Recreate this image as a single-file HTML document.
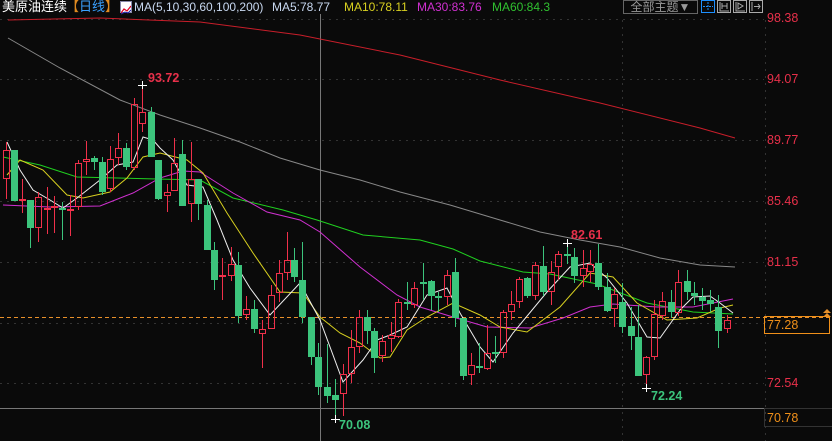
<!DOCTYPE html>
<html><head><meta charset="utf-8"><style>
html,body{margin:0;padding:0;background:#0a0a0a;width:832px;height:441px;overflow:hidden;font-family:"Liberation Sans","Noto Sans CJK SC",sans-serif}
.hd{position:absolute;top:0;left:0;height:14px;font-size:13px;line-height:14px;white-space:nowrap}
.ax{position:absolute;font-size:12.5px;line-height:14px}
</style></head><body>
<svg id="c" width="832" height="441" style="position:absolute;left:0;top:0"></svg>
<div class="hd" style="left:2px;color:#fff">美原油连续</div>
<div class="hd" style="left:66px;color:#e08a20">【<span style="color:#3aa0ff">日线</span>】</div>
<div style="position:absolute;left:120px;top:1px;width:10px;height:10px;background:#fff;border:1px solid #88a"><svg width="10" height="10"><polyline points="0,8 3,4 6,6 10,1" fill="none" stroke="#d02" stroke-width="1.2"/><polyline points="0,9 4,7 7,8 10,5" fill="none" stroke="#22a" stroke-width="1"/></svg></div>
<div class="hd" style="left:134px;color:#c8d8f0;font-size:12px">MA(5,10,30,60,100,200)</div>
<div class="hd" style="left:272px;color:#c8d8f0;font-size:12px">MA5:78.77</div>
<div class="hd" style="left:344px;color:#d8d020;font-size:12px">MA10:78.11</div>
<div class="hd" style="left:417px;color:#d030d0;font-size:12px">MA30:83.76</div>
<div class="hd" style="left:492px;color:#30c030;font-size:12px">MA60:84.3</div>
<div style="position:absolute;left:623px;top:0;width:73px;height:12px;border:1px solid #666;color:#999;font-size:12px;line-height:12px;text-align:center">全部主题▼</div>
<div class="ax" style="left:767px;top:11px;color:#e8304a">98.38</div>
<div class="ax" style="left:767px;top:72px;color:#e8304a">94.07</div>
<div class="ax" style="left:767px;top:133px;color:#e8304a">89.77</div>
<div class="ax" style="left:767px;top:194px;color:#e8304a">85.46</div>
<div class="ax" style="left:767px;top:255px;color:#e8304a">81.15</div>
<div class="ax" style="left:764px;top:316px;width:66px;border:1px solid #f0901a;color:#f0901a;line-height:16px;padding-left:2px;box-sizing:border-box;height:18px">77.28</div>
<div class="ax" style="left:767px;top:376px;color:#e8304a">72.54</div>
<div class="ax" style="left:764px;top:408px;width:68px;height:19px;border:1px solid #333;border-right:none;color:#f0901a;line-height:18px;padding-left:2px;box-sizing:border-box">70.78</div>
<div class="ax" style="left:148px;top:71px;color:#e8304a;font-weight:bold">93.72</div>
<div class="ax" style="left:571px;top:228px;color:#e8304a;font-weight:bold">82.61</div>
<div class="ax" style="left:651px;top:389px;color:#3cc47c;font-weight:bold">72.24</div>
<div class="ax" style="left:339px;top:418px;color:#3cc47c;font-weight:bold">70.08</div>
<script>
var s='';
function L(x1,y1,x2,y2,c,w,d){s+='<line x1="'+x1+'" y1="'+y1+'" x2="'+x2+'" y2="'+y2+'" stroke="'+c+'" stroke-width="'+(w||1)+'"'+(d?' stroke-dasharray="'+d+'"':'')+'/>';}
[19,79,140,201,262,323,383].forEach(function(y){L(0,y+.5,764,y+.5,'#333',1,'2,5');});
L(622.5,20,622.5,441,'#333',1,'2,5');
L(765.5,20,765.5,441,'#333',1,'2,5');
L(320.5,14,320.5,441,'#777',1);
L(0,408.5,764,408.5,'#777',1);
L(0,317.5,832,317.5,'#e8902a',1,'4,3');
s+='<rect x="701.5" y="0.5" width="13" height="12" fill="none" stroke="#1e90ff"/><path d="M708 2v9M703 6.5h10" stroke="#1e90ff" stroke-dasharray="2,1"/>';
[717,733,749].forEach(function(x){s+='<rect x="'+(x+.5)+'" y="0.5" width="13" height="12" fill="none" stroke="#aaa"/>';});
s+='<path d="M720 2v9h9M722 3v6M727 3v6M722 6h5" stroke="#aaa" fill="none"/><path d="M736 2v9h9M738 3l5 3-5 3z" stroke="#aaa" fill="none"/><path d="M752 2v9M754 6.5h6M758 4l2 2.5-2 2.5" stroke="#aaa" fill="none"/>';
s+='<path d="M823 313l4-4 4 4M823 317l4-4 4 4" fill="#e8902a"/>';
function P(pts,c){s+='<polyline points="'+pts+'" fill="none" stroke="'+c+'" stroke-width="1"/>';}
P('8,20 100,18 200,22 300,35 400,55 500,80 600,103 700,128 735,138','#c81e2a');
P('8,38 60,68 120,100 160,115 200,128 240,142 280,158 320,170 360,180 400,192 450,205 500,220 540,232 580,240 620,247 660,258 700,265 735,267','#888');
P('3,157 40,165 77,177 157,179 200,180 233,198 283,210 317,220 363,235 420,240 453,249 480,261 523,272 550,274 597,284 647,303 693,312 733,314','#20d020');
P('3,205 50,207 100,206 133,193 160,178 183,171 200,172 233,193 267,212 300,220 320,232 360,267 397,295 420,307 453,317 487,327 530,328 563,318 590,307 613,304 657,307 693,307 733,299','#d030d0');
P('7,175 20,160 43,170 67,195 83,198 110,192 127,178 143,157 160,153 187,160 203,173 227,213 253,253 280,292 303,293 320,317 340,333 360,343 380,358 390,357 407,330 427,317 453,303 480,315 500,327 527,332 560,307 590,273 613,277 637,303 667,320 697,318 720,308 733,305','#d8d020');
P('7,142 20,170 33,190 50,200 63,208 77,198 100,180 117,165 133,162 143,137 153,140 160,148 173,160 187,185 203,187 217,220 233,260 250,288 270,315 300,283 320,320 343,382 363,360 377,340 390,335 407,327 427,295 447,288 460,313 480,347 493,362 513,333 547,292 570,267 590,263 607,278 627,303 647,337 660,338 680,310 693,297 710,296 720,303 733,313','#eee');
var R='#f0304a',G='#3cc47c';
var K=[
[6,150,179,142,199,R],[14,150,201,150,201,G],[22,199,201,179,213,R],[30,200,228,200,248,G],[38,197,228,192,242,R],[47,208,210,187,234,R],[54,206,208,196,233,R],[62,208,210,202,240,G],[70,209,211,195,236,R],[78,163,207,160,210,R],[86,159,162,141,175,R],[94,158,162,156,170,G],[102,162,192,157,195,G],[110,159,189,146,192,R],[118,148,158,133,165,R],[126,148,167,143,170,G],[134,104,168,98,170,R],[142,112,124,85,132,R],[151,112,157,107,157,G],[158,160,199,160,200,G],[167,192,196,184,212,R],[174,163,191,138,191,R],[182,154,206,140,206,G],[191,179,204,142,222,R],[198,179,204,179,220,G],[207,205,250,200,250,G],[214,250,280,242,290,G],[222,275,277,258,300,R],[231,264,276,247,281,R],[238,265,316,252,323,G],[246,309,315,296,320,R],[254,309,329,300,333,G],[262,329,334,320,368,R],[271,295,329,285,329,R],[279,273,293,260,302,R],[287,260,273,232,280,R],[294,260,277,248,282,G],[302,280,317,242,323,G],[311,317,357,317,365,G],[318,357,387,343,395,G],[327,387,396,344,403,G],[335,395,400,379,419,G],[343,374,394,364,416,R],[351,347,374,330,383,R],[359,317,347,310,353,R],[367,317,331,310,344,G],[374,331,358,328,373,G],[382,341,356,335,362,R],[391,335,339,322,352,R],[398,302,337,299,338,R],[407,302,304,282,310,G],[414,288,305,282,308,R],[423,282,284,263,300,G],[431,281,296,280,310,G],[438,296,298,292,312,G],[447,275,297,270,305,R],[455,272,318,258,327,G],[463,318,376,318,380,G],[471,365,375,353,385,R],[479,366,368,343,373,G],[487,353,369,325,370,R],[495,352,354,336,363,G],[503,312,353,310,358,R],[511,304,312,291,320,R],[519,279,302,277,308,R],[527,278,296,277,298,G],[535,265,296,262,300,R],[543,266,292,246,296,G],[551,272,292,261,305,R],[558,254,267,251,280,R],[567,254,256,243,264,G],[574,257,276,248,283,G],[583,268,276,250,287,R],[590,264,272,250,282,R],[598,263,287,244,290,G],[607,287,311,273,312,G],[614,294,309,288,327,R],[622,302,327,283,333,G],[631,326,336,307,350,G],[638,337,376,305,376,G],[646,357,375,356,388,R],[654,314,357,300,360,R],[662,301,316,292,320,R],[671,302,312,290,318,G],[678,282,313,270,316,R],[687,281,292,270,300,G],[694,293,296,282,305,G],[702,297,301,288,310,G],[710,300,304,290,312,G],[718,307,331,295,348,G],[727,320,329,315,333,R]];
K.forEach(function(k){var x=k[0],t=k[1],b=k[2],h=k[3],l=k[4],c=k[5];
 L(x+.5,h,x+.5,t,c,1);L(x+.5,b,x+.5,l,c,1);
 if(b-t<2){L(x-3,t+.5,x+4,t+.5,c,2);}
 else if(c==R){s+='<rect x="'+(x-2.5)+'" y="'+(t+.5)+'" width="6" height="'+(b-t-1)+'" fill="none" stroke="'+R+'"/>';}
 else s+='<rect x="'+(x-3)+'" y="'+t+'" width="7" height="'+(b-t)+'" fill="'+G+'"/>';
});
[[142,85],[335,419],[646,388],[567,243]].forEach(function(p){L(p[0]-4,p[1]+.5,p[0]+5,p[1]+.5,'#fff',1);L(p[0]+.5,p[1]-4,p[0]+.5,p[1]+4,'#fff',1);});
document.getElementById('c').innerHTML=s;
</script>
</body></html>
